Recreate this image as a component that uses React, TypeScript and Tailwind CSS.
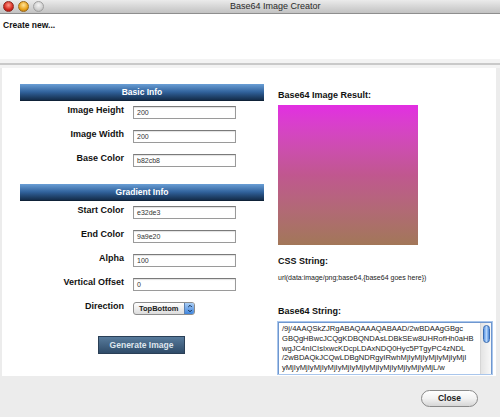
import { ChevronUp, ChevronDown } from 'lucide-react';

const BASIC_FIELDS = [
  { label: 'Image Height', value: '200' },
  { label: 'Image Width', value: '200' },
  { label: 'Base Color', value: 'b82cb8' },
];

const GRADIENT_FIELDS = [
  { label: 'Start Color', value: 'e32de3' },
  { label: 'End Color', value: '9a9e20' },
  { label: 'Alpha', value: '100' },
  { label: 'Vertical Offset', value: '0' },
];

const BASE64_LINES = [
  '/9j/4AAQSkZJRgABAQAAAQABAAD/2wBDAAgGBgc',
  'GBQgHBwcJCQgKDBQNDAsLDBkSEw8UHRofHh0aHB',
  'wgJC4nICIsIxwcKDcpLDAxNDQ0Hyc5PTgyPC4zNDL',
  '/2wBDAQkJCQwLDBgNDRgyIRwhMjIyMjIyMjIyMjIyMjI',
  'yMjIyMjIyMjIyMjIyMjIyMjIyMjIyMjIyMjIyMjIyMjL/w',
];

function SectionHeader({ title }: { title: string }) {
  return (
    <div className="h-[17px] shrink-0 flex items-center justify-center bg-gradient-to-b from-[#6a9fd6] via-[#31629c] to-[#142d4b] border-b border-[#0f2238]">
      <span className="text-[8.5px] font-bold text-white leading-none">{title}</span>
    </div>
  );
}

function FieldRow({ label, children }: { label: string; children: React.ReactNode }) {
  return (
    <div className="h-[24px] flex items-start">
      <div className="w-[104px] text-right text-[9px] font-bold text-[#111] leading-[11px] -mt-[1px]">{label}</div>
      <div className="ml-[9px]">{children}</div>
    </div>
  );
}

function TextInput({ value }: { value: string }) {
  return (
    <div className="w-[103px] h-[13px] border border-[#9a9a9a] border-t-[#7a7a7a] bg-white flex items-center pl-[3px] shadow-[inset_0_1px_1px_rgba(0,0,0,0.12)]">
      <span className="text-[7px] text-[#333] leading-none">{value}</span>
    </div>
  );
}

export default function App() {
  return (
    <div className="w-[500px] h-[417px] overflow-hidden flex flex-col bg-[#ececec] font-['Liberation_Sans',Arial,sans-serif]">
      {/* title bar */}
      <div className="h-[14px] shrink-0 flex items-center bg-gradient-to-b from-[#ebebeb] to-[#c2c2c2] border-b border-[#8e8e8e]">
        <div className="flex gap-[4px] pl-[3px]">
          <span className="w-[11px] h-[11px] rounded-full bg-[radial-gradient(circle_at_50%_35%,#ff9a8a,#d3271c_60%,#8f1410)] border border-[#8c2a22]" />
          <span className="w-[11px] h-[11px] rounded-full bg-[radial-gradient(circle_at_50%_35%,#ffe49a,#e9a21b_60%,#a66a0c)] border border-[#9a6a1a]" />
          <span className="w-[11px] h-[11px] rounded-full bg-[radial-gradient(circle_at_50%_35%,#f4f4f4,#cfcfcf_60%,#a8a8a8)] border border-[#a0a0a0]" />
        </div>
        <span className="ml-[186px] text-[9px] text-[#2a2a2a] leading-none">Base64 Image Creator</span>
      </div>

      {/* create new strip */}
      <div className="h-[45px] shrink-0 bg-white px-[3px] pt-[7px] text-[8.5px] leading-none">
        <span className="font-bold text-[#111]">Create new...</span>
      </div>

      {/* separator band */}
      <div className="h-[9px] shrink-0 bg-[#f3f3f3] flex flex-col">
        <div className="h-[4px]" />
        <div className="h-[2px] bg-[#c9c9c9]" />
      </div>

      {/* content */}
      <div className="h-[308px] shrink-0 ml-[2px] mr-[4px] bg-white flex overflow-hidden">
        <div className="w-[244px] shrink-0 ml-[18px] pt-[16px] flex flex-col">
          <SectionHeader title="Basic Info" />
          <div className="pt-[5px] shrink-0">
            {BASIC_FIELDS.map((f) => (
              <FieldRow key={f.label} label={f.label}>
                <TextInput value={f.value} />
              </FieldRow>
            ))}
          </div>
          <div className="mt-[6px] shrink-0">
            <SectionHeader title="Gradient Info" />
          </div>
          <div className="pt-[5px] shrink-0">
            {GRADIENT_FIELDS.map((f) => (
              <FieldRow key={f.label} label={f.label}>
                <TextInput value={f.value} />
              </FieldRow>
            ))}
            <FieldRow label="Direction">
              <div className="w-[62px] h-[13px] rounded-[3px] border border-[#8d8d8d] bg-gradient-to-b from-white to-[#dcdcdc] flex items-center overflow-hidden">
                <span className="flex-1 pl-[5px] text-[7.5px] font-bold text-[#222] leading-none">TopBottom</span>
                <span className="w-[10px] h-full flex flex-col items-center justify-center bg-gradient-to-b from-[#a9cdf5] to-[#3d84dc] border-l border-[#5b7fae]">
                  <ChevronUp size={6} strokeWidth={4} className="text-[#102a4c] -mb-[1px]" />
                  <ChevronDown size={6} strokeWidth={4} className="text-[#102a4c]" />
                </span>
              </div>
            </FieldRow>
          </div>
          <div className="mt-[10px] ml-[78px] shrink-0 w-[87px] h-[18px] flex items-center justify-center bg-gradient-to-b from-[#587b9c] to-[#2f4c69] border border-[#2a3f56]">
            <span className="text-[8.5px] font-bold text-[#dfe6ee] leading-none">Generate Image</span>
          </div>
        </div>

        <div className="ml-[14px] pt-[21px] flex flex-col">
          <span className="shrink-0 text-[9px] font-bold text-[#111] leading-[12px]">Base64 Image Result:</span>
          <div className="shrink-0 mt-[4px] w-[140px] h-[140px] bg-gradient-to-b from-[#e22de2] via-[#c0578f] to-[#a27758]" />
          <span className="shrink-0 mt-[10px] text-[9px] font-bold text-[#111] leading-[12px]">CSS String:</span>
          <span className="shrink-0 mt-[6px] text-[7px] text-[#222] leading-[10px] whitespace-nowrap">url(data:image/png;base64,{'{'}base64 goes here{'}'})</span>
          <span className="shrink-0 mt-[22px] text-[9px] font-bold text-[#111] leading-[12px]">Base64 String:</span>
          <div className="shrink-0 mt-[5px] w-[214px] h-[52px] border border-b-0 border-[#6f97cf] shadow-[0_0_0_1px_#a9c6ec] bg-white flex">
            <div className="flex-1 pl-[3px] pt-[1px] overflow-hidden">
              {BASE64_LINES.map((line) => (
                <div key={line} className="text-[7.6px] text-[#222] leading-[9.8px] whitespace-nowrap">{line}</div>
              ))}
            </div>
            <div className="w-[11px] border-l border-[#d6d6d6] bg-gradient-to-r from-[#e4e4e4] to-[#f8f8f8] flex justify-center pt-[2px]">
              <div className="w-[7px] h-[18px] rounded-full bg-gradient-to-r from-[#5e98e6] via-[#b6d6fa] to-[#4c88da] border border-[#3a6cb0]" />
            </div>
          </div>
        </div>
      </div>

      {/* footer */}
      <div className="flex-1 flex justify-end items-start pt-[14px] pr-[22px]">
        <div className="w-[57px] h-[17px] rounded-full border border-[#8a8a8a] bg-gradient-to-b from-white via-[#f2f2f2] to-[#d6d6d6] flex items-center justify-center">
          <span className="text-[8.5px] font-bold text-[#222] leading-none">Close</span>
        </div>
      </div>
    </div>
  );
}
